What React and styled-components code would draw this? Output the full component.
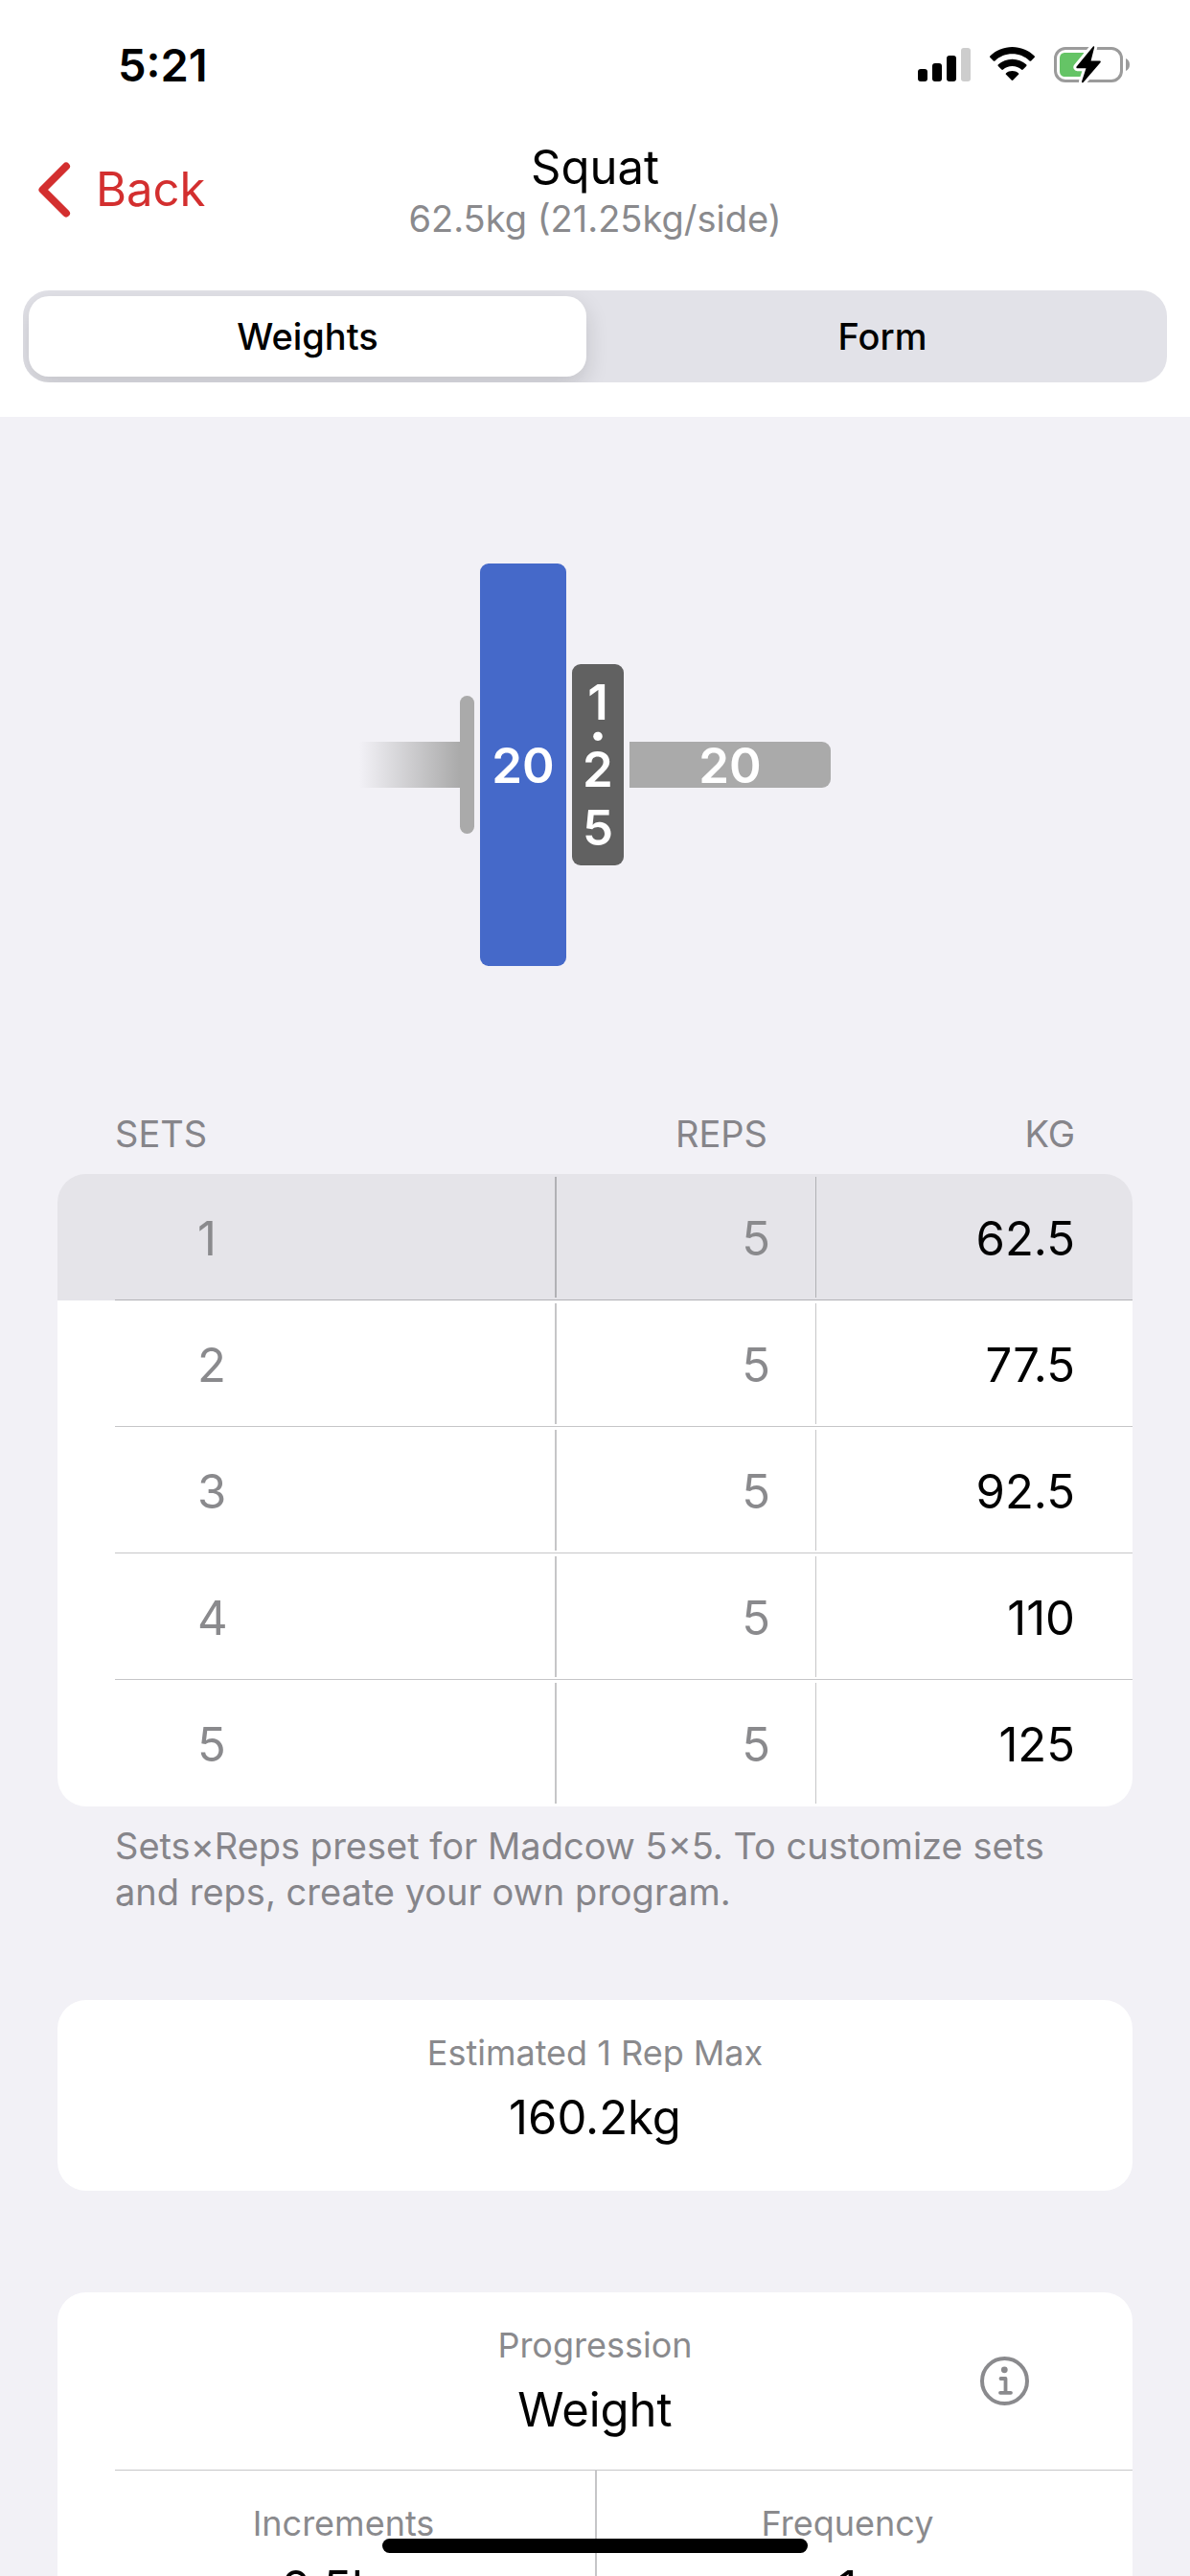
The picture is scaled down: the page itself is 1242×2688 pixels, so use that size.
import React, { useState } from 'react';
import styled, { createGlobalStyle } from 'styled-components';

const GlobalStyle = createGlobalStyle`
  * {
    box-sizing: border-box;
  }
  body {
    margin: 0;
    background: #f2f1f6;
    font-family: Inter, "Liberation Sans", sans-serif;
    color: #000;
  }
  button {
    border: 0;
    padding: 0;
    background: none;
    font-family: inherit;
    color: inherit;
    cursor: pointer;
  }
`;

const Screen = styled.div`
  height: 100vh;
  display: flex;
  flex-direction: column;
  overflow: hidden;
`;

const Header = styled.header`
  flex: none;
  background: #fff;
  padding-bottom: 36px;
`;

const StatusBar = styled.div`
  height: 132px;
  padding: 2px 62px 0 123px;
  display: flex;
  align-items: center;
  justify-content: space-between;
`;

const Time = styled.span`
  font-size: 47px;
  font-weight: 600;
`;

const StatusIcons = styled.div`
  padding-top: 2px;
  display: flex;
  align-items: center;
  gap: 20px;
  svg {
    display: block;
  }
`;

const NavBar = styled.nav`
  height: 132px;
  padding: 0 40px;
  display: grid;
  grid-template-columns: 1fr auto 1fr;
  align-items: center;
`;

const BackButton = styled.button`
  justify-self: start;
  display: flex;
  align-items: center;
  gap: 26px;
  font-size: 49px;
  line-height: 60px;
  color: #d32f2f;
`;

const TitleBlock = styled.div`
  text-align: center;
  h1 {
    margin: 0;
    font-size: 49px;
    font-weight: 400;
    line-height: 60px;
  }
  p {
    margin: 0;
    font-size: 38px;
    line-height: 46px;
    color: #8a8a8d;
  }
`;

const Segments = styled.div`
  height: 96px;
  margin: 39px 24px 0;
  padding: 6px;
  display: flex;
  gap: 18px;
  background: #e2e2e8;
  border-radius: 27px;
  overflow: hidden;
`;

const Segment = styled.button`
  flex: 1;
  border-radius: 21px;
  font-size: 38px;
  font-weight: 500;
  background: ${({ $active }) => ($active ? '#fff' : 'transparent')};
  box-shadow: ${({ $active }) =>
    $active ? '0 9px 24px rgba(0, 0, 0, 0.14)' : 'none'};
`;

const Content = styled.main`
  flex: 1;
  min-height: 0;
  padding: 0 60px;
  overflow-y: auto;
  scrollbar-width: none;
`;

const Barbell = styled.div`
  padding: 153px 0 151px;
  display: flex;
  justify-content: center;
  align-items: center;
  gap: 6px;
  font-size: 51px;
  font-weight: 600;
  line-height: 61px;
  color: #fff;
`;

const Grip = styled.div`
  display: flex;
  align-items: center;
`;

const Shaft = styled.div`
  width: 105px;
  height: 48px;
  background: linear-gradient(to right, #f2f1f6, #aaa);
`;

const Collar = styled.div`
  width: 15px;
  height: 144px;
  border-radius: 8px;
  background: #aaa;
`;

const Plate = styled.div`
  width: ${({ $width }) => $width}px;
  height: ${({ $height }) => $height}px;
  display: flex;
  flex-direction: column;
  align-items: center;
  justify-content: center;
  border-radius: 9px;
  background: ${({ $color }) => $color};
`;

const Point = styled.span`
  font-weight: 800;
  line-height: 9px;
`;

const Sleeve = styled.div`
  width: 210px;
  height: 48px;
  display: flex;
  align-items: center;
  justify-content: center;
  border-radius: 0 9px 9px 0;
  background: #aaa;
`;

const SetsTable = styled.table`
  width: 100%;
  table-layout: fixed;
  border-collapse: separate;
  border-spacing: 0;
  text-align: right;
  th {
    padding: 0 0 18px;
    font-size: 38px;
    font-weight: 400;
    line-height: 48px;
    color: #86858a;
  }
  th:nth-child(1) {
    width: 521px;
    padding-left: 60px;
    text-align: left;
  }
  th:nth-child(2) {
    padding-right: 51px;
  }
  th:nth-child(3) {
    width: 330px;
    padding-right: 60px;
  }
`;

const SetRow = styled.tr`
  --line: ${({ $active }) => ($active ? '#b1b1b5' : '#c6c6c8')};
  --fill: ${({ $active }) => ($active ? '#e5e4e9' : '#fff')};
  --rule: linear-gradient(var(--line), var(--line)) no-repeat;
  td {
    height: 132px;
    padding: 2px 0 0;
    font-size: 49px;
    color: #8a8a8d;
  }
  /* row rule starts at the text inset, column rules stop short of it */
  td:nth-child(1) {
    padding-left: 146px;
    text-align: left;
    background: var(--rule) 60px 100% / 100% 1px,
      var(--rule) 100% 3px / 2px 126px, var(--fill);
  }
  td:nth-child(2) {
    padding-right: 48px;
    background: var(--rule) 0 100% / 100% 1px,
      var(--rule) 100% 3px / 1px 126px, var(--fill);
  }
  td:nth-child(3) {
    padding-right: 60px;
    color: #000;
    background: var(--rule) 0 100% / 100% 1px, var(--fill);
  }
  &:first-child td:first-child {
    border-top-left-radius: 30px;
  }
  &:first-child td:last-child {
    border-top-right-radius: 30px;
  }
  &:last-child td:nth-child(1) {
    background-size: 0 0, 2px 126px;
    border-bottom-left-radius: 30px;
  }
  &:last-child td:nth-child(2) {
    background-size: 0 0, 1px 126px;
  }
  &:last-child td:nth-child(3) {
    background-size: 0 0;
    border-bottom-right-radius: 30px;
  }
`;

const Footnote = styled.p`
  margin: 17px 60px 89px;
  font-size: 38px;
  line-height: 48px;
  color: #86858a;
`;

const Card = styled.section`
  margin-bottom: 106px;
  border-radius: 30px;
  background: #fff;
`;

const Stat = styled.div`
  padding: 33px 0 ${({ $bottom }) => $bottom || 32}px;
  display: flex;
  flex-direction: column;
  align-items: center;
  gap: 16px;
`;

const StatLabel = styled.span`
  font-size: 36px;
  line-height: 44px;
  color: #8a8a8d;
`;

const StatValue = styled.span`
  font-size: 49px;
  line-height: 60px;
`;

const ProgressionRow = styled.div`
  margin-left: 60px;
  padding: 0 108px 0 48px;
  display: grid;
  grid-template-columns: 1fr auto 1fr;
  align-items: center;
  border-bottom: 1px solid #c6c6c8;
  ${Stat} {
    grid-column: 2;
  }
`;

const InfoButton = styled.button`
  justify-self: end;
  svg {
    display: block;
  }
`;

const Columns = styled.div`
  padding: 0 36px;
  display: grid;
  grid-template-columns: 1fr 1fr;
  ${Stat} + ${Stat} {
    border-left: 2px solid #c6c6c8;
  }
`;

const HomeIndicator = styled.div`
  position: fixed;
  left: 50%;
  bottom: 24px;
  width: 444px;
  height: 15px;
  margin-left: -222px;
  border-radius: 8px;
  background: #000;
`;

const sets = [
  { set: 1, reps: 5, kg: '62.5' },
  { set: 2, reps: 5, kg: '77.5' },
  { set: 3, reps: 5, kg: '92.5' },
  { set: 4, reps: 5, kg: '110' },
  { set: 5, reps: 5, kg: '125' },
];

const SignalIcon = () => (
  <svg width="55" height="38" viewBox="0 0 55 38" aria-hidden="true">
    <rect x="0" y="23" width="10" height="13" rx="3" />
    <rect x="15" y="17" width="10" height="19" rx="3" />
    <rect x="30" y="9" width="10" height="27" rx="3" />
    <rect x="45" y="1" width="10" height="35" rx="3" fill="#cdcdcd" />
  </svg>
);

const WifiIcon = () => (
  <svg width="47" height="38" viewBox="0 0 47 38" aria-hidden="true">
    <path d="M23.5 0C32.3 0 40.400 3.500 46.500 9.200c.6.600.6 1.200.1 1.700l-3.400 3.500c-.5.500-1.100.5-1.700 0C36.700 9.900 30.400 7.300 23.500 7.300S10.300 9.900 5.500 14.400c-.6.500-1.200.5-1.700 0L.4 10.900c-.5-.5-.5-1.100.1-1.700C6.600 3.500 14.700 0 23.500 0z" />
    <path d="M23.500 12.700c5.600 0 10.700 2.100 14.600 5.600.6.600.6 1.200.1 1.700l-3.500 3.500c-.5.500-1.100.5-1.700.1-2.500-2.200-5.800-3.600-9.500-3.600s-7 1.400-9.500 3.600c-.6.400-1.200.4-1.700-.1L8.800 20c-.5-.5-.5-1.100.1-1.700 3.900-3.500 9-5.600 14.600-5.600z" />
    <path d="M23.500 25c2.500 0 4.700.8 6.400 2.200.6.500.6 1.100.1 1.600l-5.600 5.800c-.6.600-1.200.6-1.800 0L17 28.800c-.5-.5-.5-1.100.1-1.600 1.700-1.400 3.900-2.200 6.400-2.200z" />
  </svg>
);

const BatteryIcon = () => (
  <svg width="80" height="40" viewBox="0 0 80 40" aria-hidden="true">
    <rect x="1.500" y="2.500" width="69" height="34" rx="10.500" fill="none" stroke="#9b9b9b" strokeWidth="3" />
    <path d="M12 7h19v25H12c-4 0-6-2-6-6V13c0-4 2-6 6-6z" fill="#65c466" />
    <path d="M75 13c2.500 1 4 3.500 4 6.500S77.500 25 75 26z" fill="#9b9b9b" />
    <path
      d="M42.200 1.200c.1-1-.9-1.300-1.500-.5L23.600 21.500c-.6.700-.2 1.700.8 1.700h9.100L29 37c-.2 1.100.9 1.700 1.600.9l17.900-20.700c.6-.8.200-1.600-.8-1.600h-9.100z"
      fill="#000"
      stroke="#fff"
      strokeWidth="6"
      strokeLinejoin="round"
      paintOrder="stroke"
    />
  </svg>
);

const ChevronIcon = () => (
  <svg width="34" height="58" viewBox="0 0 34 58" aria-hidden="true">
    <path
      d="M29 4.500L4.500 29L29 53.500"
      fill="none"
      stroke="currentColor"
      strokeWidth="8"
      strokeLinecap="round"
      strokeLinejoin="round"
    />
  </svg>
);

const InfoIcon = () => (
  <svg width="51" height="51" viewBox="0 0 51 51" aria-hidden="true">
    <circle cx="25.500" cy="25.500" r="23.500" fill="none" stroke="#8a8a8d" strokeWidth="4" />
    <circle cx="25.300" cy="13.800" r="3.400" fill="#8a8a8d" />
    <path
      d="M21.500 23H26.500V37.500M21 37.800H32"
      fill="none"
      stroke="#8a8a8d"
      strokeWidth="3.800"
      strokeLinecap="round"
      strokeLinejoin="round"
    />
  </svg>
);

function App() {
  const [tab, setTab] = useState('Weights');

  return (
    <Screen>
      <GlobalStyle />
      <Header>
        <StatusBar>
          <Time>5:21</Time>
          <StatusIcons>
            <SignalIcon />
            <WifiIcon />
            <BatteryIcon />
          </StatusIcons>
        </StatusBar>
        <NavBar>
          <BackButton type="button">
            <ChevronIcon />
            Back
          </BackButton>
          <TitleBlock>
            <h1>Squat</h1>
            <p>62.5kg (21.25kg/side)</p>
          </TitleBlock>
        </NavBar>
        <Segments>
          {['Weights', 'Form'].map((name) => (
            <Segment
              key={name}
              type="button"
              $active={tab === name}
              aria-pressed={tab === name}
              onClick={() => setTab(name)}
            >
              {name}
            </Segment>
          ))}
        </Segments>
      </Header>
      <Content>
        <Barbell>
          <Grip>
            <Shaft />
            <Collar />
          </Grip>
          <Plate $width={90} $height={420} $color="#4569c9">
            20
          </Plate>
          <Plate $width={54} $height={210} $color="#616161">
            <span>1</span>
            <Point>·</Point>
            <span>2</span>
            <span>5</span>
          </Plate>
          <Sleeve>20</Sleeve>
        </Barbell>
        <SetsTable>
          <thead>
            <tr>
              <th scope="col">SETS</th>
              <th scope="col">REPS</th>
              <th scope="col">KG</th>
            </tr>
          </thead>
          <tbody>
            {sets.map(({ set, reps, kg }) => (
              <SetRow key={set} $active={set === 1}>
                <td>{set}</td>
                <td>{reps}</td>
                <td>{kg}</td>
              </SetRow>
            ))}
          </tbody>
        </SetsTable>
        <Footnote>
          Sets×Reps preset for Madcow 5×5. To customize sets and reps, create
          your own program.
        </Footnote>
        <Card>
          <Stat $bottom={46}>
            <StatLabel>Estimated 1 Rep Max</StatLabel>
            <StatValue>160.2kg</StatValue>
          </Stat>
        </Card>
        <Card>
          <ProgressionRow>
            <Stat>
              <StatLabel>Progression</StatLabel>
              <StatValue>Weight</StatValue>
            </Stat>
            <InfoButton type="button" aria-label="About progression">
              <InfoIcon />
            </InfoButton>
          </ProgressionRow>
          <Columns>
            <Stat>
              <StatLabel>Increments</StatLabel>
              <StatValue>2.5kg</StatValue>
            </Stat>
            <Stat>
              <StatLabel>Frequency</StatLabel>
              <StatValue>1</StatValue>
            </Stat>
          </Columns>
        </Card>
      </Content>
      <HomeIndicator />
    </Screen>
  );
}

export default App;
